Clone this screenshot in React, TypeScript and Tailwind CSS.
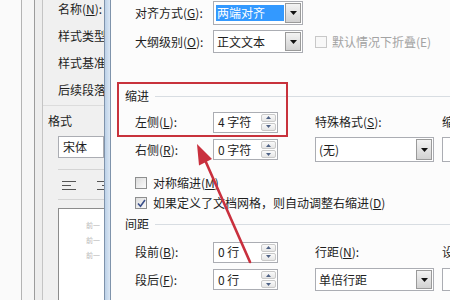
import React from 'react';

const DropArrow = () => (
  <svg width="7" height="4" viewBox="0 0 7 4">
    <path d="M0 0h7L3.5 4z" fill="#111" />
  </svg>
);

const SpinArrow = ({ up }: { up?: boolean }) => (
  <svg width="5" height="3" viewBox="0 0 5 3">
    <path d={up ? 'M0 3h5L2.5 0z' : 'M0 0h5L2.5 3z'} fill="#4f6285" />
  </svg>
);

const Select = ({ text, wide, highlight }: { text: string; wide?: boolean; highlight?: boolean }) => (
  <div className={`flex h-full border border-[#abadb3] bg-white ${wide ? 'w-[119px]' : 'w-[90px]'}`}>
    <div className="flex flex-1 items-center pl-[2px] pr-[1px]">
      {highlight ? (
        <span className="flex h-[16px] w-full items-center bg-[#3399ff] pl-[1px] text-white">{text}</span>
      ) : (
        <span className="pl-[1px]">{text}</span>
      )}
    </div>
    <div className="my-[1px] mr-[1px] flex w-[16px] items-center justify-center border border-[#9a9a9a] bg-gradient-to-b from-[#f3f3f3] to-[#d2d2d2]">
      <DropArrow />
    </div>
  </div>
);

const Spin = ({ text }: { text: string }) => (
  <div className="flex h-[21px] w-[65px] border border-[#abadb3] bg-white">
    <div className="flex flex-1 items-center pl-[4px]">{text}</div>
    <div className="my-[1px] mr-[1px] flex w-[15px] flex-col gap-[1px]">
      <div className="flex flex-1 items-center justify-center rounded-[2px] border border-[#c9c9c9] bg-gradient-to-b from-[#fafafa] to-[#e6e6e6]">
        <SpinArrow up />
      </div>
      <div className="flex flex-1 items-center justify-center rounded-[2px] border border-[#c9c9c9] bg-gradient-to-b from-[#fafafa] to-[#e6e6e6]">
        <SpinArrow />
      </div>
    </div>
  </div>
);

const Check = ({ checked, disabled }: { checked?: boolean; disabled?: boolean }) => (
  <div
    className={`flex h-[12px] w-[12px] shrink-0 items-center justify-center border ${
      disabled ? 'border-[#c8c8c8] bg-[#f8f8f8]' : 'border-[#8e8f8f] bg-gradient-to-br from-[#dcdcdc] to-[#fbfbfb]'
    }`}
  >
    {checked && (
      <svg width="9" height="9" viewBox="0 0 9 9">
        <path d="M1 4.5l2.5 2.8L8 1" fill="none" stroke="#3a4f8a" strokeWidth="1.6" />
      </svg>
    )}
  </div>
);

const Header = ({ text }: { text: string }) => (
  <div className="flex h-[16px] items-center pl-[14px]">
    <span>{text}</span>
    <div className="ml-[6px] h-px flex-1 bg-[#d8dde2]" />
  </div>
);

const Row = ({ h, children }: { h: string; children: React.ReactNode }) => (
  <div className={`grid grid-cols-[78px_102px_127px_60px] items-center pl-[24px] ${h}`}>{children}</div>
);

export default function App() {
  return (
    <div className="relative flex h-[300px] w-[450px] overflow-hidden bg-white font-['Noto_Sans_CJK_SC',sans-serif] text-[12px] leading-none text-[#1e1e1e]">
      {/* desktop strips behind */}
      <div className="w-[22px] shrink-0 border-r border-[#b4b4b4] bg-[#fafafa]" />
      <div className="w-[13px] shrink-0 border-r border-[#9c9c9c] bg-[#f6f6f6]" />
      <div className="w-[8px] shrink-0 border-r border-[#c4c4c4] bg-[#ededed]" />

      {/* back dialog */}
      <div className="flex w-[61px] shrink-0 flex-col overflow-hidden whitespace-nowrap bg-[#f0f0f0]">
        <div className="flex flex-col gap-[14px] pl-[15px] pt-[3px]">
          <div className="h-[13px]">
            名称(<u>N</u>):
          </div>
          <div className="h-[13px]">样式类型(Y):</div>
          <div className="h-[13px]">样式基准(B):</div>
          <div className="h-[13px]">后续段落样式(S):</div>
        </div>
        <div className="mt-[8px] h-px bg-[#dcdcdc]" />
        <div className="mt-[9px] pl-[5px]">格式</div>
        <div className="ml-[15px] mt-[9px] flex h-[22px] items-center border border-[#abadb3] bg-white pl-[4px]">宋体</div>
        <div className="ml-[15px] mt-[11px] h-px bg-[#d4d4d4]" />
        <div className="ml-[19px] mt-[11px] flex gap-[21px]">
          <svg width="14" height="9" viewBox="0 0 14 9" className="shrink-0">
            <path d="M0 0.5h14M0 4.5h9M0 8.5h14" stroke="#555" strokeWidth="1" />
          </svg>
          <svg width="14" height="9" viewBox="0 0 14 9" className="shrink-0">
            <path d="M0 0.5h14M5 4.5h9M0 8.5h14" stroke="#555" strokeWidth="1" />
          </svg>
        </div>
        <div className="ml-[15px] mt-[9px] h-px bg-[#d4d4d4]" />
        <div className="ml-[15px] mt-[8px] flex flex-1 flex-col items-end gap-[8px] border-l border-t border-[#8c8c8c] bg-white pr-[4px] pt-[13px] text-[7px] text-[#b8b8b8]">
          <span>前一</span>
          <span>前一</span>
          <span>前一</span>
        </div>
      </div>

      {/* main dialog frame */}
      <div className="w-[7px] shrink-0 border-x border-[#7f93ab] bg-gradient-to-r from-[#bcd1e8] to-[#dbe7f4]" />

      {/* main dialog */}
      <div className="flex min-w-0 flex-1 flex-col overflow-hidden bg-[#fcfcfc]">
        <div className="mt-[1px]">
          <Row h="h-[24px]">
            <span className="whitespace-nowrap">
              对齐方式(<u>G</u>):
            </span>
            <div className="h-full">
              <Select text="两端对齐" highlight />
            </div>
          </Row>
        </div>
        <div className="mt-[5px]">
          <Row h="h-[23px]">
            <span className="whitespace-nowrap">
              大纲级别(<u>O</u>):
            </span>
            <div className="h-full">
              <Select text="正文文本" />
            </div>
            <div className="col-span-2 flex items-center gap-[5px] whitespace-nowrap text-[#a3a3a3]">
              <Check disabled />
              <span>默认情况下折叠(E)</span>
            </div>
          </Row>
        </div>

        <div className="mt-[35px]">
          <Header text="缩进" />
        </div>
        <div className="mt-[6px]">
          <Row h="h-[24px]">
            <span className="whitespace-nowrap">
              左侧(<u>L</u>):
            </span>
            <Spin text="4 字符" />
            <span className="whitespace-nowrap">
              特殊格式(<u>S</u>):
            </span>
            <span className="whitespace-nowrap">缩进值(<u>Y</u>):</span>
          </Row>
        </div>
        <div className="mt-[3px]">
          <Row h="h-[25px]">
            <span className="whitespace-nowrap">
              右侧(<u>R</u>):
            </span>
            <Spin text="0 字符" />
            <div className="h-full">
              <Select text="(无)" wide />
            </div>
            <div className="h-full w-[60px] border border-[#abadb3] bg-white" />
          </Row>
        </div>

        <div className="mt-[13px] flex h-[16px] items-center gap-[6px] pl-[24px] whitespace-nowrap">
          <Check />
          <span>
            对称缩进(<u>M</u>)
          </span>
        </div>
        <div className="mt-[4px] flex h-[16px] items-center gap-[6px] pl-[24px] whitespace-nowrap">
          <Check checked />
          <span>
            如果定义了文档网格，则自动调整右缩进(<u>D</u>)
          </span>
        </div>

        <div className="mt-[5px]">
          <Header text="间距" />
        </div>
        <div className="mt-[8px]">
          <Row h="h-[24px]">
            <span className="whitespace-nowrap">
              段前(<u>B</u>):
            </span>
            <Spin text="0 行" />
            <span className="whitespace-nowrap">
              行距(<u>N</u>):
            </span>
            <span className="whitespace-nowrap">设置值(<u>A</u>):</span>
          </Row>
        </div>
        <div className="mt-[4px]">
          <Row h="h-[23px]">
            <span className="whitespace-nowrap">
              段后(<u>F</u>):
            </span>
            <Spin text="0 行" />
            <div className="h-full">
              <Select text="单倍行距" wide />
            </div>
            <div className="h-full w-[60px] border border-[#abadb3] bg-white" />
          </Row>
        </div>
      </div>

      {/* annotation: red box */}
      <div className="absolute left-[117px] top-[82px] h-[55px] w-[171px] border-2 border-[#c8323c]" />

      {/* annotation: red arrow */}
      <svg className="pointer-events-none absolute left-0 top-0" width="450" height="300" viewBox="0 0 450 300">
        <line x1="205" y1="160" x2="250" y2="262" stroke="#c9303e" strokeWidth="2.6" strokeLinecap="round" />
        <polygon points="197,144 212,159 199,165.5" fill="#c9303e" />
      </svg>
    </div>
  );
}
